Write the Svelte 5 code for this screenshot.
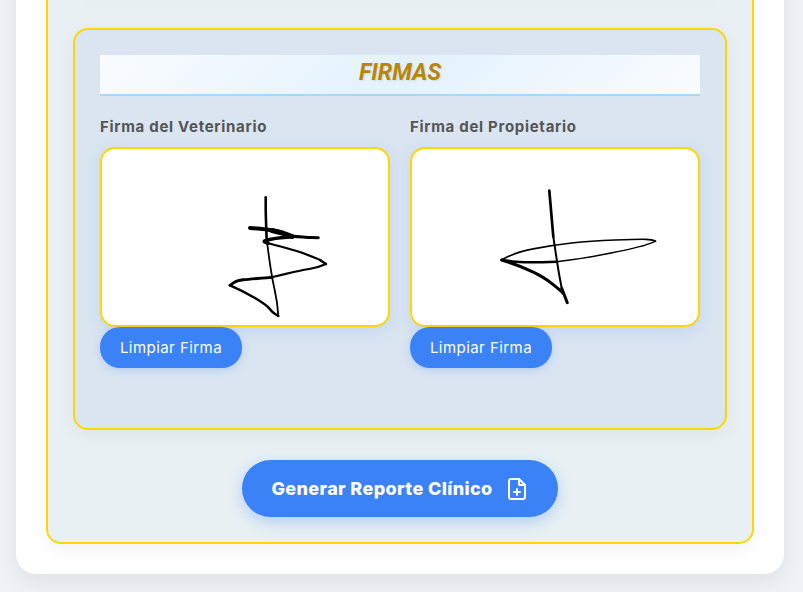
<script>
  // signature strokes in page coordinates, same as the drawing pad's viewBox
  const vet = [
    { w: 4, pts: [[250,228],[266.7,229.2],[280,232]] },
    { w: 5, pts: [[272,230.5],[283,233],[292,236.5]] },
    { w: 3, pts: [[290,236],[305,237.4],[318.3,237.8]] },
    { w: 3.4, pts: [[293,236.8],[280,237.5],[261.7,241],[268.3,243.3]] },
    { w: 2.2, pts: [[268.3,243.3],[295,250],[318,259],[321,260.5]] },
    { w: 2.4, pts: [[320,260],[326,264]] },
    { w: 2.2, pts: [[326,264],[318.3,267.5],[300,270.5],[271.7,277.3]] },
    { w: 2.8, pts: [[271.7,277.3],[250,279],[236.7,280.5],[230,285.3]] },
    { w: 2.5, pts: [[230,285.3],[243.3,291],[266.7,305],[272,312],[278.3,316]] },
    { w: 1.8, pts: [[278.3,316],[277.7,303.3],[271.7,276.7],[266.7,240]] },
    { w: 2.6, pts: [[266.7,240],[265.7,215],[265.7,197.3]] }
  ]
  const owner = [
    { w: 2.7, pts: [[549.3,190.7],[553.3,236.7]] },
    { w: 2, pts: [[553.3,236.7],[557.7,266.7],[561.7,288.3]] },
    { w: 3, pts: [[561.7,288.3],[567.3,302.7]] },
    { w: 3.1, pts: [[563,293],[560,290],[543.3,276.7],[520,266],[501.7,260]] },
    { w: 1.7, pts: [[501.7,260],[513.3,252.7],[553.3,245],[590,241],[640,239],[652,239.6],[655.5,241.2]] },
    { w: 1.4, pts: [[655.5,241.2],[652,243],[636.7,247.7],[590,257.3],[556.7,261.7]] },
    { w: 2.6, pts: [[556.7,261.7],[523.3,263],[501.7,260]] }
  ]

  const pads = [
    { label: 'Firma del Veterinario', box: '102 149 286 176', strokes: vet },
    { label: 'Firma del Propietario', box: '412 149 286 176', strokes: owner }
  ]

  const toPath = (pts) => {
    let d = `M${pts[0][0]} ${pts[0][1]}`
    for (let i = 1; i < pts.length - 1; i++) {
      const mx = (pts[i][0] + pts[i + 1][0]) / 2
      const my = (pts[i][1] + pts[i + 1][1]) / 2
      d += `Q${pts[i][0]} ${pts[i][1]} ${mx} ${my}`
    }
    const last = pts[pts.length - 1]
    return d + `L${last[0]} ${last[1]}`
  }
</script>

<div class="page">
  <div class="card">
    <section class="report">
      <div class="prev"></div>

      <div class="signatures">
        <h2>FIRMAS</h2>
        <div class="pads">
          {#each pads as pad}
            <div class="pad">
              <label for={pad.label}>{pad.label}</label>
              <div class="canvas" id={pad.label}>
                <svg viewBox={pad.box} width="286" height="176" fill="none" stroke="#000" stroke-linecap="round" stroke-linejoin="round">
                  {#each pad.strokes as s}
                    <path d={toPath(s.pts)} stroke-width={s.w} />
                  {/each}
                </svg>
              </div>
              <button class="clear">Limpiar Firma</button>
            </div>
          {/each}
        </div>
      </div>

      <div class="actions">
        <button class="generate">
          Generar Reporte Clínico
          <svg viewBox="0 0 24 24" width="24" height="24" fill="none" stroke="#fff" stroke-width="2" stroke-linecap="round" stroke-linejoin="round">
            <path d="M14 2H6a2 2 0 0 0-2 2v16a2 2 0 0 0 2 2h12a2 2 0 0 0 2-2V8z" />
            <path d="M14 2v6h6" />
            <path d="M12 18v-6" />
            <path d="M9 15h6" />
          </svg>
        </button>
      </div>
    </section>
  </div>
</div>

<style>
  :global(body){margin:0;background:#eff3f8;font-family:"Inter","Noto Sans",sans-serif;}
  .page{height:592px;overflow:hidden;padding:0 19px 0 16px;box-sizing:border-box;}
  .card{margin-top:-60px;padding:30px;background:#fff;border-radius:20px;box-shadow:0 8px 24px rgba(0,0,0,.08);}
  .report{padding:25px;background:#e8f0f3;border:2px solid #ffd700;border-radius:15px;box-shadow:0 5px 20px rgba(0,0,0,.05);}
  .prev{height:1px;margin-bottom:30px;background:#fff;box-shadow:0 5px 20px rgba(0,0,0,.1);}
  .signatures{padding:25px 25px 60px;background:#dae5f1;border:2px solid #ffd700;border-radius:15px;box-shadow:0 5px 20px rgba(0,0,0,.05);}
  h2{margin:0 0 20px;height:39px;line-height:34px;text-align:center;font-family:"Roboto",sans-serif;font-size:23.2px;font-weight:700;font-style:italic;color:#b8860b;background:linear-gradient(135deg,#fafcff,#e3f2fd 50%,#fafcff);border-bottom:2px solid #a5d8ff;text-shadow:1px 1px 2px rgba(0,0,0,.12);}
  .pads{display:grid;grid-template-columns:1fr 1fr;gap:20px;}
  label{display:block;height:22px;line-height:22px;margin-bottom:9px;font-size:15px;font-weight:700;letter-spacing:.7px;color:#555;}
  .canvas{height:176px;background:#fff;border:2px solid #ffd700;border-radius:15px;box-shadow:0 4px 15px rgba(59,130,246,.15);}
  .canvas svg{display:block;}
  button{font-family:inherit;color:#fff;background:#3b82f6;border:none;}
  .clear{display:block;width:142px;height:41px;padding:0;font-size:15px;letter-spacing:.45px;border-radius:20px;box-shadow:0 2px 8px rgba(59,130,246,.25);}
  .actions{display:flex;justify-content:center;margin-top:30px;}
  .generate{display:flex;align-items:center;justify-content:center;gap:12px;width:316px;height:57px;padding:0;font-size:18px;font-weight:800;letter-spacing:.38px;border-radius:30px;box-shadow:0 5px 15px rgba(59,130,246,.3);}
</style>
